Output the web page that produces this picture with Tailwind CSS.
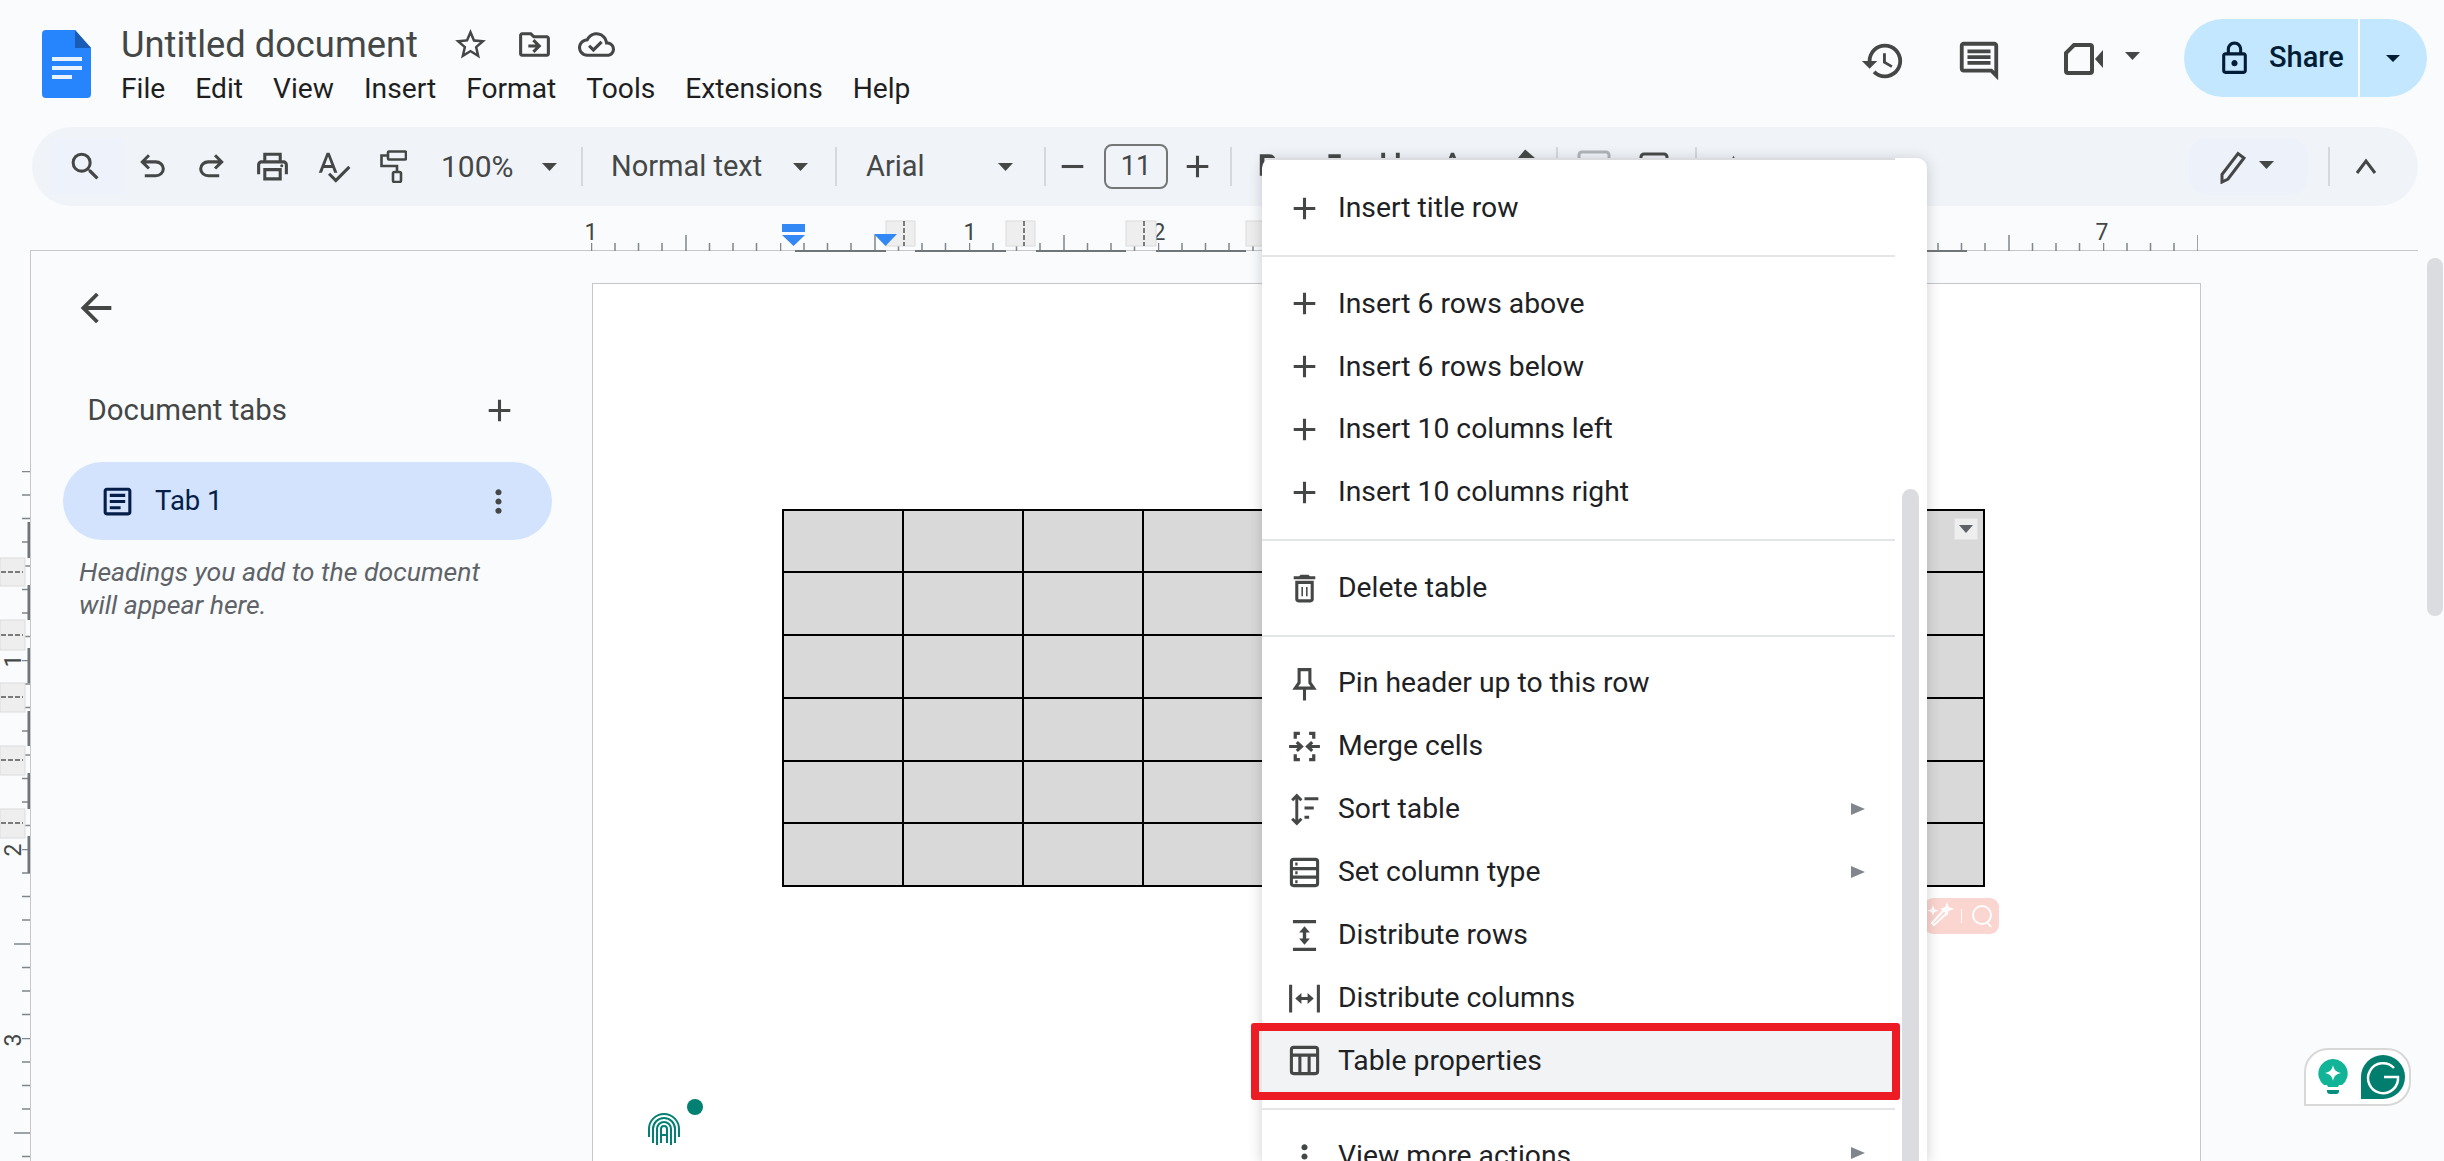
<!DOCTYPE html>
<html>
<head>
<meta charset="utf-8">
<script src="https://cdn.jsdelivr.net/npm/@tailwindcss/browser@4"></script>
</head>
<body class="m-0">
<div class="relative w-[2444px] h-[1161px] overflow-hidden bg-[#f9fbfd] font-['Roboto',sans-serif] text-[28px] text-[#1f1f1f]">

  <!-- header -->
  <header class="flex h-[127px]">
    <svg class="ml-[42px] mt-[30px] w-[49px] h-[68px] shrink-0" viewBox="0 0 49 68">
      <path d="M4 0H33L49 18V64a4 4 0 0 1-4 4H4a4 4 0 0 1-4-4V4a4 4 0 0 1 4-4z" fill="#2684fc"/>
      <path d="M33 0L49 18H33z" fill="#1a5cb5"/>
      <path d="M10 27h30v4H10zM10 36h30v4H10zM10 45h20v4H10z" fill="#fff" fill-opacity=".9"/>
    </svg>
    <div class="ml-[30px] flex flex-col">
      <div class="flex items-center mt-[26px] h-[37px]">
        <span class="w-[331px] text-[36.3px] leading-[37px] text-[#444746]">Untitled document</span>
        <svg class="w-[37px] h-[37px]" viewBox="0 0 24 24" fill="#444746"><path d="M22 9.24l-7.19-.62L12 2 9.19 8.63 2 9.24l5.46 4.73L5.82 21 12 17.27 18.18 21l-1.63-7.03L22 9.24zM12 15.4l-3.76 2.27 1-4.28-3.32-2.88 4.38-.38L12 6.1l1.71 4.04 4.38.38-3.32 2.88 1 4.28L12 15.4z"/></svg>
        <svg class="ml-[27px] w-[37px] h-[37px]" viewBox="0 0 24 24" fill="#444746"><path d="M20 6h-8l-2-2H4c-1.1 0-2 .9-2 2v12c0 1.1.9 2 2 2h16c1.1 0 2-.9 2-2V8c0-1.1-.9-2-2-2zm0 12H4V6h5.17l2 2H20v10zm-8.01-9.5L10.58 9.9 12.67 12H8v2h4.67l-2.09 2.1 1.41 1.4L16.5 13l-4.51-4.5z"/></svg>
        <svg class="ml-[25px] w-[37px] h-[37px]" viewBox="0 0 24 24" fill="#444746"><path d="M19.35 10.04C18.67 6.59 15.64 4 12 4 9.11 4 6.6 5.64 5.35 8.04 2.34 8.36 0 10.91 0 14c0 3.31 2.69 6 6 6h13c2.76 0 5-2.24 5-5 0-2.64-2.05-4.78-4.65-4.96zM19 18H6c-2.21 0-4-1.79-4-4 0-2.05 1.53-3.76 3.56-3.97l1.07-.11.5-.95C8.08 7.14 9.94 6 12 6c2.62 0 4.88 1.86 5.39 4.43l.3 1.5 1.53.11c1.56.1 2.78 1.41 2.78 2.96 0 1.65-1.35 3-3 3zm-9-3.82l-2.09-2.09L6.5 13.5 10 17l6.01-6.01-1.41-1.41z"/></svg>
      </div>
      <nav class="flex gap-[30px] mt-[10px] text-[28.2px] leading-[32px]">
        <span>File</span><span>Edit</span><span>View</span><span>Insert</span><span>Format</span><span>Tools</span><span>Extensions</span><span>Help</span>
      </nav>
    </div>
    <div class="ml-auto flex items-start pt-[19px] pr-[17px]">
      <svg class="mt-[19px] w-[46px] h-[46px]" viewBox="0 0 24 24" fill="#444746"><path d="M13 3a9 9 0 0 0-9 9H1l3.89 3.89.07.14L9 12H6c0-3.87 3.13-7 7-7s7 3.13 7 7-3.13 7-7 7c-1.93 0-3.68-.79-4.94-2.06l-1.42 1.42A8.954 8.954 0 0 0 13 21a9 9 0 0 0 0-18zm-1 5v5l4.28 2.54.72-1.21-3.5-2.08V8H12z"/></svg>
      <svg class="ml-[50px] mt-[19px] w-[46px] h-[46px]" viewBox="0 0 24 24" fill="#444746"><path d="M22 4c0-1.1-.9-2-2-2H4c-1.1 0-2 .9-2 2v12c0 1.1.9 2 2 2h14l4 4V4zm-2 13.17L18.83 16H4V4h16v13.17zM6 12h12v2H6zm0-3h12v2H6zm0-3h12v2H6z"/></svg>
      <svg class="ml-[62px] mt-[24px] w-[39px] h-[32px]" viewBox="0 0 39 32">
        <path d="M10 2H26a2 2 0 0 1 2 2V28a2 2 0 0 1-2 2H4a2 2 0 0 1-2-2V10z" fill="none" stroke="#444746" stroke-width="4"/>
        <path d="M31 16l8-9v18z" fill="#444746"/>
      </svg>
      <svg class="ml-[22px] mt-[33px] w-[15px] h-[8px]" viewBox="0 0 15 8" fill="#444746"><path d="M0 0h15L7.5 8z"/></svg>
      <div class="ml-[44px] flex w-[243px] h-[78px] rounded-full bg-[#c2e7ff] text-[#001d35]">
        <div class="flex items-center w-[176px] border-r-2 border-[#f9fbfd]">
          <svg class="ml-[32px] w-[37px] h-[37px]" viewBox="0 0 24 24" fill="#001d35"><path d="M18 8h-1V6c0-2.76-2.24-5-5-5S7 3.24 7 6v2H6c-1.1 0-2 .9-2 2v10c0 1.1.9 2 2 2h12c1.1 0 2-.9 2-2V10c0-1.1-.9-2-2-2zM9 6c0-1.66 1.34-3 3-3s3 1.34 3 3v2H9V6zm9 14H6V10h12v10zm-6-3c1.1 0 2-.9 2-2s-.9-2-2-2-2 .9-2 2 .9 2 2 2z"/></svg>
          <span class="ml-[16px] text-[29px] font-medium">Share</span>
        </div>
        <div class="flex-1 flex items-center justify-center pr-[2px]">
          <svg class="w-[14px] h-[7px]" viewBox="0 0 14 7" fill="#001d35"><path d="M0 0h14L7 7z"/></svg>
        </div>
      </div>
    </div>
  </header>

  <!-- toolbar -->
  <div class="flex items-center ml-[32px] w-[2386px] h-[79px] rounded-full bg-[#f0f4f9] text-[#444746] text-[29px]">
    <div class="flex items-center justify-center ml-[18px] w-[74px] h-[55px] pr-[4px] bg-[#eef3fb]">
      <svg class="w-[37px] h-[37px]" viewBox="0 0 24 24" fill="#444746"><path d="M15.5 14h-.79l-.28-.27A6.471 6.471 0 0 0 16 9.5 6.5 6.5 0 1 0 9.5 16c1.61 0 3.09-.59 4.23-1.57l.27.28v.79l5 4.99L20.49 19l-4.99-5zm-6 0C7.01 14 5 11.99 5 9.5S7.01 5 9.5 5 14 7.01 14 9.5 11.99 14 9.5 14z"/></svg>
    </div>
    <div class="flex justify-center w-[56px]"><svg class="w-[37px] h-[37px]" viewBox="0 0 24 24" fill="#444746"><path d="M7 19v-2h7.1q1.575 0 2.737-1T18 13.5q0-1.5-1.163-2.5T14.1 10H7.8l2.6 2.6L9 14 4 9l5-5 1.4 1.4L7.8 8h6.3q2.425 0 4.163 1.575T20 13.5q0 2.35-1.737 3.925T14.1 19z"/></svg></div>
    <div class="flex justify-center w-[62px]"><svg class="w-[37px] h-[37px] -scale-x-100" viewBox="0 0 24 24" fill="#444746"><path d="M7 19v-2h7.1q1.575 0 2.737-1T18 13.5q0-1.5-1.163-2.5T14.1 10H7.8l2.6 2.6L9 14 4 9l5-5 1.4 1.4L7.8 8h6.3q2.425 0 4.163 1.575T20 13.5q0 2.35-1.737 3.925T14.1 19z"/></svg></div>
    <div class="flex justify-center w-[61px]"><svg class="w-[37px] h-[37px]" viewBox="0 0 24 24" fill="#444746"><path fill-rule="evenodd" d="M19 8h-1V3H6v5H5c-1.66 0-3 1.34-3 3v6h4v4h12v-4h4v-6c0-1.66-1.34-3-3-3zM8 5h8v3H8V5zm8 14H8v-4h8v4zm2-2v-4H6v4H4v-6c0-.55.45-1 1-1h14c.55 0 1 .45 1 1v6h-2zM18 10.5a1 1 0 1 0 0 2 1 1 0 0 0 0-2z"/></svg></div>
    <div class="flex justify-center w-[60px]"><svg class="w-[37px] h-[37px]" viewBox="0 0 24 24" fill="#444746"><path d="M12.45 16h2.09L9.43 3H7.57L2.46 16h2.09l1.12-3h5.64l1.14 3zm-6.02-5L8.5 5.48 10.57 11H6.43zm15.16.59l-8.09 8.09L9.83 16l-1.41 1.41 5.09 5.09L23 13l-1.41-1.41z"/></svg></div>
    <div class="flex justify-center w-[60px]"><svg class="w-[27px] h-[33px]" viewBox="0 0 27 33" fill="none" stroke="#444746" stroke-width="2.6"><rect x="8" y="1.5" width="18" height="8" rx="1"/><path d="M8 5.5H1.5V16H17V22"/><rect x="13" y="22" width="8" height="10" rx="1.5"/></svg></div>
    <span class="w-[108px] pl-[18px] text-[30px]">100%</span>
    <div class="flex justify-center w-[36px]"><svg class="w-[15px] h-[8px]" viewBox="0 0 15 8" fill="#444746"><path d="M0 0h15L7.5 8z"/></svg></div>
    <div class="ml-[14px] w-[2px] h-[39px] bg-[#d5d8dc]"></div>
    <span class="ml-[28px] w-[170px]">Normal text</span>
    <div class="flex justify-center w-[38px]"><svg class="w-[15px] h-[8px]" viewBox="0 0 15 8" fill="#444746"><path d="M0 0h15L7.5 8z"/></svg></div>
    <div class="ml-[16px] w-[2px] h-[39px] bg-[#d5d8dc]"></div>
    <span class="ml-[29px] w-[120px]">Arial</span>
    <div class="flex justify-center w-[38px]"><svg class="w-[15px] h-[8px]" viewBox="0 0 15 8" fill="#444746"><path d="M0 0h15L7.5 8z"/></svg></div>
    <div class="ml-[20px] w-[2px] h-[39px] bg-[#d5d8dc]"></div>
    <div class="flex justify-center w-[52px]"><svg class="w-[37px] h-[37px]" viewBox="0 0 24 24" fill="#444746"><path d="M5 11h14v2H5z"/></svg></div>
    <div class="ml-[6px] flex items-center justify-center w-[64px] h-[45px] border-2 border-[#747775] rounded-[8px] text-[27px]">11</div>
    <div class="flex justify-center w-[58px]"><svg class="w-[37px] h-[37px]" viewBox="0 0 24 24" fill="#444746"><path d="M19 13h-6v6h-2v-6H5v-2h6V5h2v6h6v2z"/></svg></div>
    <div class="ml-[4px] w-[2px] h-[39px] bg-[#d5d8dc]"></div>
    <div class="flex justify-center w-[70px]"><svg class="w-[37px] h-[37px]" viewBox="0 0 24 24" fill="#444746"><path d="M15.6 10.79c.97-.67 1.65-1.77 1.65-2.79 0-2.26-1.75-4-4-4H7v14h7.04c2.09 0 3.71-1.7 3.71-3.79 0-1.52-.86-2.82-2.15-3.42zM10 6.5h3c.83 0 1.5.67 1.5 1.5s-.67 1.5-1.5 1.5h-3v-3zm3.5 9H10v-3h3.5c.83 0 1.5.67 1.5 1.5s-.67 1.5-1.5 1.5z"/></svg></div>
    <div class="flex justify-center w-[58px]"><svg class="w-[37px] h-[37px]" viewBox="0 0 24 24" fill="#444746"><path d="M10 4v3h2.21l-3.42 8H6v3h8v-3h-2.21l3.42-8H18V4z"/></svg></div>
    <div class="flex justify-center w-[60px]"><svg class="w-[37px] h-[37px]" viewBox="0 0 24 24" fill="#444746"><path d="M12 17c3.31 0 6-2.69 6-6V3h-2.5v8c0 1.93-1.57 3.5-3.5 3.5S8.5 12.93 8.5 11V3H6v8c0 3.31 2.69 6 6 6zm-7 2v2h14v-2H5z"/></svg></div>
    <div class="flex justify-center w-[64px]"><svg class="w-[37px] h-[37px]" viewBox="0 0 24 24" fill="#444746"><path d="M11 3L5.5 17h2.25l1.12-3h6.25l1.12 3h2.25L13 3h-2zm-1.38 9L12 5.67 14.38 12H9.62z"/></svg></div>
    <div class="flex justify-center w-[72px]"><svg class="w-[37px] h-[37px]" viewBox="0 0 24 24" fill="#444746"><path d="M15 1l7 6-10 10H8l-3-4z"/></svg></div>
    <div class="w-[2px] h-[39px] bg-[#d5d8dc]"></div>
    <div class="flex justify-center w-[72px]"><svg class="w-[34px] h-[34px]" viewBox="0 0 34 34" fill="none" stroke="#b0b3b8" stroke-width="3"><rect x="2" y="2" width="30" height="30" rx="3"/></svg></div>
    <div class="flex justify-center w-[48px]"><svg class="w-[30px] h-[30px]" viewBox="0 0 30 30" fill="none" stroke="#444746" stroke-width="3"><rect x="2" y="2" width="26" height="26" rx="3"/></svg></div>
    <div class="ml-[17px] w-[2px] h-[39px] bg-[#d5d8dc]"></div>
    <div class="flex justify-center w-[72px]"><svg class="w-[37px] h-[37px]" viewBox="0 0 24 24" fill="#444746"><path d="M12 5l7 14H5z"/></svg></div>
    <div class="ml-auto flex items-center justify-center gap-[10px] w-[119px] h-[57px] pr-[5px] rounded-[18px] bg-[#edf2fa]">
      <svg class="w-[30px] h-[34px]" viewBox="0 0 30 34" fill="none" stroke="#444746" stroke-width="3"><path d="M3 24.5L19 3.5l6 4.5L9 29l-6 3z"/></svg>
      <svg class="w-[15px] h-[8px] mb-[4px]" viewBox="0 0 15 8" fill="#444746"><path d="M0 0h15L7.5 8z"/></svg>
    </div>
    <div class="ml-[20px] w-[2px] h-[39px] bg-[#d5d8dc]"></div>
    <div class="flex justify-center w-[74px] mr-[14px] pr-[3px]"><svg class="w-[26px] h-[26px]" viewBox="0 0 26 26" fill="none" stroke="#444746" stroke-width="3"><path d="M4 19L13 7l9 12"/></svg></div>
  </div>

  <!-- horizontal ruler -->
  <div class="relative h-[44px]">
    <svg class="absolute left-0 top-0 w-[2444px] h-[46px]" viewBox="0 0 2444 46">
      <defs>
        <pattern id="rt" x="591" y="0" width="189" height="46" patternUnits="userSpaceOnUse">
          <path d="M.5 37v8M24 37v8M47.5 37v8M71 37v8M95 29v16M118.5 37v8M142 37v8M165.5 37v8" stroke="#80868b" stroke-width="1.5" fill="none"/>
        </pattern>
      </defs>
      <rect x="591" y="0" width="1607" height="45" fill="url(#rt)"/>
      <g fill="#444746" font-family="Roboto" font-size="23" text-anchor="middle">
        <text x="591" y="34">1</text><text x="970" y="34">1</text><text x="1159" y="34">2</text><text x="2102" y="34">7</text>
      </g>
      <path d="M795 45H886M915 45H1006M1036 45H1126M1156 45H1246M1927 45H1967" stroke="#70757a" stroke-width="2" fill="none"/>
      <g fill="#eeeeee" stroke="#dcdcdc" stroke-width="1"><rect x="886" y="15" width="29" height="25"/><rect x="1006" y="15" width="29" height="25"/><rect x="1126" y="15" width="30" height="25"/><rect x="1246" y="15" width="30" height="25"/></g>
      <path d="M904 15V40M1024 15V40M1144 15V40" stroke="#555" stroke-width="1.5" stroke-dasharray="5 2" fill="none"/>
      <g fill="#3288f4"><rect x="782" y="18" width="23" height="8"/><path d="M782 29h23L793.5 40zM874 28h23L885.5 40z"/></g>
    </svg>
  </div>

  <!-- main -->
  <div class="flex h-[911px]">
    <svg class="w-[30px] shrink-0 h-[911px]" viewBox="0 0 30 911">
      <defs>
        <pattern id="vt" x="0" y="221" width="30" height="189" patternUnits="userSpaceOnUse">
          <path d="M22 .5h8M22 24h8M22 47.5h8M22 71h8M14 95h16M22 118.5h8M22 142h8M22 165.5h8" stroke="#80868b" stroke-width="1.5" fill="none"/>
        </pattern>
      </defs>
      <rect x="0" y="221" width="30" height="690" fill="url(#vt)"/>
      <g fill="#eeeeee" stroke="#dcdcdc" stroke-width="1"><rect x="0" y="308" width="25" height="28"/><rect x="0" y="370" width="25" height="30"/><rect x="0" y="433" width="25" height="29"/><rect x="0" y="496" width="25" height="29"/><rect x="0" y="559" width="25" height="29"/></g>
      <path d="M1 322H23M1 385H23M1 447H23M1 510H23M1 573H23" stroke="#555" stroke-width="1.5" stroke-dasharray="5 2" fill="none"/>
      <path d="M29 272V308M29 335V370M29 398V433M29 461V496M29 523V559M29 586V623" stroke="#70757a" stroke-width="3" fill="none"/>
      <g fill="#444746" font-family="Roboto" font-size="23" text-anchor="middle">
        <text transform="translate(21 411) rotate(-90)">1</text>
        <text transform="translate(21 600) rotate(-90)">2</text>
        <text transform="translate(21 790) rotate(-90)">3</text>
      </g>
    </svg>
    <div class="flex flex-1 h-full border-l-[1.5px] border-t-[1.5px] border-[#c7c7c7] w-[2388px] mr-[26px] box-border">
      <aside class="w-[561px] shrink-0 flex flex-col pt-[33.5px]">
        <svg class="ml-[42px] w-[46px] h-[46px]" viewBox="0 0 24 24" fill="#444746"><path d="M20 11H7.83l5.59-5.59L12 4l-8 8 8 8 1.41-1.41L7.83 13H20v-2z"/></svg>
        <div class="mt-[61.5px] ml-[56.5px] w-[430px] h-[37px] flex items-center justify-between text-[29.4px] text-[#444746]">
          <span>Document tabs</span>
          <svg class="w-[37px] h-[37px]" viewBox="0 0 24 24" fill="#444746"><path d="M19 13h-6v6h-2v-6H5v-2h6V5h2v6h6v2z"/></svg>
        </div>
        <div class="mt-[33px] ml-[32px] w-[489px] h-[78px] rounded-full bg-[#d3e3fd] flex items-center pl-[36px] pr-[35px] text-[#041e49] text-[27.5px]">
          <svg class="w-[37px] h-[37px]" viewBox="0 0 24 24" fill="#041e49"><path d="M19 5v14H5V5h14m0-2H5c-1.1 0-2 .9-2 2v14c0 1.1.9 2 2 2h14c1.1 0 2-.9 2-2V5c0-1.1-.9-2-2-2zM14 17H7v-2h7v2zm3-4H7v-2h10v2zm0-4H7V7h10v2z"/></svg>
          <span class="ml-[19px]">Tab 1</span>
          <svg class="ml-auto w-[37px] h-[37px]" viewBox="0 0 24 24" fill="#444746"><path d="M12 8c1.1 0 2-.9 2-2s-.9-2-2-2-2 .9-2 2 .9 2 2 2zm0 2c-1.1 0-2 .9-2 2s.9 2 2 2 2-.9 2-2-.9-2-2-2zm0 6c-1.1 0-2 .9-2 2s.9 2 2 2 2-.9 2-2-.9-2-2-2z"/></svg>
        </div>
        <p class="mt-[14.5px] ml-[48px] italic text-[#5f6368] text-[26.6px] leading-[33px]">Headings you add to the document<br>will appear here.</p>
      </aside>
      <div class="mt-[31.5px] w-[1609px] h-[900px] bg-white border-l-[1.5px] border-t-[1.5px] border-r-[1.5px] border-[#c7c7c7] pl-[188.5px] pt-[225px] relative">
        <table class="border-collapse table-fixed w-[1203px]">
          <tbody>
            <tr class="h-[62.75px]"><td class="border-2 border-black bg-[#d9d9d9]"></td><td class="border-2 border-black bg-[#d9d9d9]"></td><td class="border-2 border-black bg-[#d9d9d9]"></td><td class="border-2 border-black bg-[#d9d9d9]"></td><td class="border-2 border-black bg-[#d9d9d9]"></td><td class="border-2 border-black bg-[#d9d9d9]"></td><td class="border-2 border-black bg-[#d9d9d9]"></td><td class="border-2 border-black bg-[#d9d9d9]"></td><td class="border-2 border-black bg-[#d9d9d9]"></td><td class="border-2 border-black bg-[#d9d9d9]"></td></tr>
            <tr class="h-[62.75px]"><td class="border-2 border-black bg-[#d9d9d9]"></td><td class="border-2 border-black bg-[#d9d9d9]"></td><td class="border-2 border-black bg-[#d9d9d9]"></td><td class="border-2 border-black bg-[#d9d9d9]"></td><td class="border-2 border-black bg-[#d9d9d9]"></td><td class="border-2 border-black bg-[#d9d9d9]"></td><td class="border-2 border-black bg-[#d9d9d9]"></td><td class="border-2 border-black bg-[#d9d9d9]"></td><td class="border-2 border-black bg-[#d9d9d9]"></td><td class="border-2 border-black bg-[#d9d9d9]"></td></tr>
            <tr class="h-[62.75px]"><td class="border-2 border-black bg-[#d9d9d9]"></td><td class="border-2 border-black bg-[#d9d9d9]"></td><td class="border-2 border-black bg-[#d9d9d9]"></td><td class="border-2 border-black bg-[#d9d9d9]"></td><td class="border-2 border-black bg-[#d9d9d9]"></td><td class="border-2 border-black bg-[#d9d9d9]"></td><td class="border-2 border-black bg-[#d9d9d9]"></td><td class="border-2 border-black bg-[#d9d9d9]"></td><td class="border-2 border-black bg-[#d9d9d9]"></td><td class="border-2 border-black bg-[#d9d9d9]"></td></tr>
            <tr class="h-[62.75px]"><td class="border-2 border-black bg-[#d9d9d9]"></td><td class="border-2 border-black bg-[#d9d9d9]"></td><td class="border-2 border-black bg-[#d9d9d9]"></td><td class="border-2 border-black bg-[#d9d9d9]"></td><td class="border-2 border-black bg-[#d9d9d9]"></td><td class="border-2 border-black bg-[#d9d9d9]"></td><td class="border-2 border-black bg-[#d9d9d9]"></td><td class="border-2 border-black bg-[#d9d9d9]"></td><td class="border-2 border-black bg-[#d9d9d9]"></td><td class="border-2 border-black bg-[#d9d9d9]"></td></tr>
            <tr class="h-[62.75px]"><td class="border-2 border-black bg-[#d9d9d9]"></td><td class="border-2 border-black bg-[#d9d9d9]"></td><td class="border-2 border-black bg-[#d9d9d9]"></td><td class="border-2 border-black bg-[#d9d9d9]"></td><td class="border-2 border-black bg-[#d9d9d9]"></td><td class="border-2 border-black bg-[#d9d9d9]"></td><td class="border-2 border-black bg-[#d9d9d9]"></td><td class="border-2 border-black bg-[#d9d9d9]"></td><td class="border-2 border-black bg-[#d9d9d9]"></td><td class="border-2 border-black bg-[#d9d9d9]"></td></tr>
            <tr class="h-[62.75px]"><td class="border-2 border-black bg-[#d9d9d9]"></td><td class="border-2 border-black bg-[#d9d9d9]"></td><td class="border-2 border-black bg-[#d9d9d9]"></td><td class="border-2 border-black bg-[#d9d9d9]"></td><td class="border-2 border-black bg-[#d9d9d9]"></td><td class="border-2 border-black bg-[#d9d9d9]"></td><td class="border-2 border-black bg-[#d9d9d9]"></td><td class="border-2 border-black bg-[#d9d9d9]"></td><td class="border-2 border-black bg-[#d9d9d9]"></td><td class="border-2 border-black bg-[#d9d9d9]"></td></tr>
          </tbody>
        </table>
      </div>
    </div>
  </div>

  <!-- table cell dropdown -->
  <div class="absolute left-[1954px] top-[518px] w-[24px] h-[22px] bg-[#eeeeee] border border-[#e2e2e2] flex items-center justify-center">
    <svg class="w-[14px] h-[8px]" viewBox="0 0 14 8" fill="#5f6368"><path d="M0 0h14L7 8z"/></svg>
  </div>

  <!-- pink grammarly suggestion -->
  <div class="absolute left-[1924px] top-[898px] w-[75px] h-[36px] rounded-[9px] bg-[#fbd5cf] flex items-center justify-center gap-[6px]">
    <svg class="w-[28px] h-[28px]" viewBox="0 0 28 28" fill="none" stroke="#fff" stroke-width="2"><path d="M7 23l-2-2L17 8l3 3zM20 3l1 3 3 1-3 1-1 3-1-3-3-1 3-1zM6 6l.7 2 2 .7-2 .7L6 11l-.7-1.6-2-.7 2-.7z"/></svg>
    <div class="w-px h-[14px] bg-white"></div>
    <svg class="w-[28px] h-[28px]" viewBox="0 0 28 28" fill="none" stroke="#fff" stroke-width="2"><circle cx="14" cy="13" r="9"/><path d="M19 20l4 5"/></svg>
  </div>

  <!-- fingerprint -->
  <svg class="absolute left-[648px] top-[1113px] w-[32px] h-[32px]" viewBox="0 0 32 32" fill="none" stroke="#028071" stroke-width="2">
    <path d="M1 24V16a15 15 0 0 1 30 0v8M5 30V16a11 11 0 0 1 22 0v14M9 32V16a7 7 0 0 1 14 0v16M13 30V16a3 3 0 0 1 6 0v14M13 22h6"/>
  </svg>
  <div class="absolute left-[687px] top-[1099px] w-[16px] h-[16px] rounded-full bg-[#028071]"></div>

  <!-- grammarly widget -->
  <div class="absolute left-[2304px] top-[1048px] w-[107px] h-[58px] bg-white border-2 border-[#d8d8d8] rounded-tl-[24px] rounded-tr-[24px] rounded-br-[24px] flex items-center">
    <svg class="ml-[12px] w-[30px] h-[36px]" viewBox="0 0 30 36">
      <path d="M15 0a14.5 14.5 0 0 1 9 26H21l-1 2H10l-1-2H6A14.5 14.5 0 0 1 15 0z" fill="#11b497"/>
      <path d="M9 31h12v1a3 3 0 0 1-3 3h-6a3 3 0 0 1-3-3z" fill="#068f7c"/>
      <path d="M15 6c1 5 3 7 8 8-5 1-7 3-8 8-1-5-3-7-8-8 5-1 7-3 8-8z" fill="#fff"/>
    </svg>
    <svg class="ml-[13px] w-[44px] h-[44px]" viewBox="0 0 44 44">
      <path d="M22 0a22 22 0 0 1 0 44H0V22A22 22 0 0 1 22 0z" fill="#027e6f"/>
      <path d="M33 13a15 15 0 1 0 4 9H23" fill="none" stroke="#fff" stroke-width="2.5"/>
    </svg>
  </div>

  <!-- page scrollbar -->
  <div class="absolute left-[2427px] top-[258px] w-[16px] h-[358px] rounded-full bg-[#dadce0]"></div>

  <!-- context menu -->
  <div class="absolute left-[1262px] top-[158px] w-[665px] h-[1003px] bg-white rounded-t-[10px] shadow-[0_2px_14px_rgba(60,64,67,0.25)] overflow-hidden text-[28.3px] text-[#202124]">
    <div class="w-[633px] h-[2px] bg-[#dadce0]"></div>
    <div class="w-[633px] pt-[17px]">
      <div class="flex items-center h-[62.9px] pl-[24px]"><svg class="w-[37px] h-[37px] shrink-0" viewBox="0 0 24 24" fill="#444746"><path d="M19 13h-6v6h-2v-6H5v-2h6V5h2v6h6v2z"/></svg><span class="ml-[15px]">Insert title row</span></div>
      <div class="h-[2px] my-[15.3px] bg-[#e4e5e7]"></div>
      <div class="flex items-center h-[62.9px] pl-[24px]"><svg class="w-[37px] h-[37px] shrink-0" viewBox="0 0 24 24" fill="#444746"><path d="M19 13h-6v6h-2v-6H5v-2h6V5h2v6h6v2z"/></svg><span class="ml-[15px]">Insert 6 rows above</span></div>
      <div class="flex items-center h-[62.9px] pl-[24px]"><svg class="w-[37px] h-[37px] shrink-0" viewBox="0 0 24 24" fill="#444746"><path d="M19 13h-6v6h-2v-6H5v-2h6V5h2v6h6v2z"/></svg><span class="ml-[15px]">Insert 6 rows below</span></div>
      <div class="flex items-center h-[62.9px] pl-[24px]"><svg class="w-[37px] h-[37px] shrink-0" viewBox="0 0 24 24" fill="#444746"><path d="M19 13h-6v6h-2v-6H5v-2h6V5h2v6h6v2z"/></svg><span class="ml-[15px]">Insert 10 columns left</span></div>
      <div class="flex items-center h-[62.9px] pl-[24px]"><svg class="w-[37px] h-[37px] shrink-0" viewBox="0 0 24 24" fill="#444746"><path d="M19 13h-6v6h-2v-6H5v-2h6V5h2v6h6v2z"/></svg><span class="ml-[15px]">Insert 10 columns right</span></div>
      <div class="h-[2px] my-[15.3px] bg-[#e4e5e7]"></div>
      <div class="flex items-center h-[62.9px] pl-[24px]"><svg class="w-[37px] h-[37px] shrink-0" viewBox="0 0 24 24" fill="#444746"><path d="M6 19c0 1.1.9 2 2 2h8c1.1 0 2-.9 2-2V7H6v12zM8 9h8v10H8V9zm7.5-5l-1-1h-5l-1 1H5v2h14V4h-3.5zM10 11h1v6h-1zM13 11h1v6h-1z"/></svg><span class="ml-[15px]">Delete table</span></div>
      <div class="h-[2px] my-[15.3px] bg-[#e4e5e7]"></div>
      <div class="flex items-center h-[62.9px] pl-[24px]"><svg class="w-[37px] h-[37px] shrink-0" viewBox="0 0 24 24" fill="none" stroke="#444746" stroke-width="2"><path d="M8.5 3h7v8.5l2.5 3.5H6l2.5-3.5zM12 15v8"/></svg><span class="ml-[15px]">Pin header up to this row</span></div>
      <div class="flex items-center h-[62.9px] pl-[24px]"><svg class="w-[37px] h-[37px] shrink-0" viewBox="0 0 24 24" fill="none" stroke="#444746" stroke-width="2.1"><path d="M6 7V3.5h3M15 3.5h3V7M6 17v3.5h3M15 20.5h3V17M2 12h7M7 9.2L10 12l-3 2.8M22 12h-7M17 9.2L14 12l3 2.8"/></svg><span class="ml-[15px]">Merge cells</span></div>
      <div class="flex items-center h-[62.9px] pl-[24px]"><svg class="w-[37px] h-[37px] shrink-0" viewBox="0 0 24 24" fill="none" stroke="#444746" stroke-width="1.9"><path d="M7 3v18M4 6l3-3 3 3M4 18l3 3 3-3M12 5h9M12 11h6M12 17h3"/></svg><span class="ml-[15px]">Sort table</span></div>
      <div class="flex items-center h-[62.9px] pl-[24px]"><svg class="w-[37px] h-[37px] shrink-0" viewBox="0 0 24 24" fill="none" stroke="#444746" stroke-width="2"><rect x="3.5" y="3.5" width="17" height="17" rx="1.5"/><path d="M3.5 9.5h17M3.5 15h17M6 6.5h1.5M6 12.2h1.5M6 18h1.5"/></svg><span class="ml-[15px]">Set column type</span></div>
      <div class="flex items-center h-[62.9px] pl-[24px]"><svg class="w-[37px] h-[37px] shrink-0" viewBox="0 0 24 24" fill="none" stroke="#444746" stroke-width="2.2"><path d="M4.5 3h15M4.5 21h15M12 8v8"/><path d="M8.5 10L12 6l3.5 4zM8.5 14L12 18l3.5-4z" fill="#444746" stroke="none"/></svg><span class="ml-[15px]">Distribute rows</span></div>
      <div class="flex items-center h-[62.9px] pl-[24px]"><svg class="w-[37px] h-[37px] shrink-0" viewBox="0 0 24 24" fill="none" stroke="#444746" stroke-width="2"><path d="M3 3v18M21 3v18M8 12h8"/><path d="M10 8.5L6 12l4 3.5zM14 8.5L18 12l-4 3.5z" fill="#444746" stroke="none"/></svg><span class="ml-[15px]">Distribute columns</span></div>
      <div class="flex items-center h-[62.9px] pl-[24px] bg-[#f1f3f4]"><svg class="w-[37px] h-[37px] shrink-0" viewBox="0 0 24 24" fill="none" stroke="#444746" stroke-width="2"><rect x="3.5" y="3.5" width="17" height="17" rx="1.5"/><path d="M3.5 8.5h17M9 8.5v12M15 8.5v12"/></svg><span class="ml-[15px]">Table properties</span></div>
      <div class="h-[2px] my-[15.3px] bg-[#e4e5e7]"></div>
      <div class="flex items-center h-[62.9px] pl-[24px]"><svg class="w-[37px] h-[37px] shrink-0" viewBox="0 0 24 24" fill="#444746"><path d="M12 8c1.1 0 2-.9 2-2s-.9-2-2-2-2 .9-2 2 .9 2 2 2zm0 2c-1.1 0-2 .9-2 2s.9 2 2 2 2-.9 2-2-.9-2-2-2zm0 6c-1.1 0-2 .9-2 2s.9 2 2 2 2-.9 2-2-.9-2-2-2z"/></svg><span class="ml-[15px]">View more actions</span></div>
    </div>
    <!-- submenu arrows -->
    <svg class="absolute left-[589px] top-[645px] w-[14px] h-[12px]" viewBox="0 0 14 12" fill="#80868b"><path d="M0 0l14 6-14 6z"/></svg>
    <svg class="absolute left-[589px] top-[708px] w-[14px] h-[12px]" viewBox="0 0 14 12" fill="#80868b"><path d="M0 0l14 6-14 6z"/></svg>
    <svg class="absolute left-[589px] top-[989px] w-[14px] h-[12px]" viewBox="0 0 14 12" fill="#80868b"><path d="M0 0l14 6-14 6z"/></svg>
    <!-- menu scrollbar -->
    <div class="absolute left-[640px] top-[331px] w-[17px] h-[700px] rounded-full bg-[#dadce0]"></div>
  </div>

  <!-- red annotation box -->
  <div class="absolute left-[1251px] top-[1023px] w-[649px] h-[77px] border-[8px] border-[#ed1c24] rounded-[3px]"></div>
</div>
</body>
</html>
